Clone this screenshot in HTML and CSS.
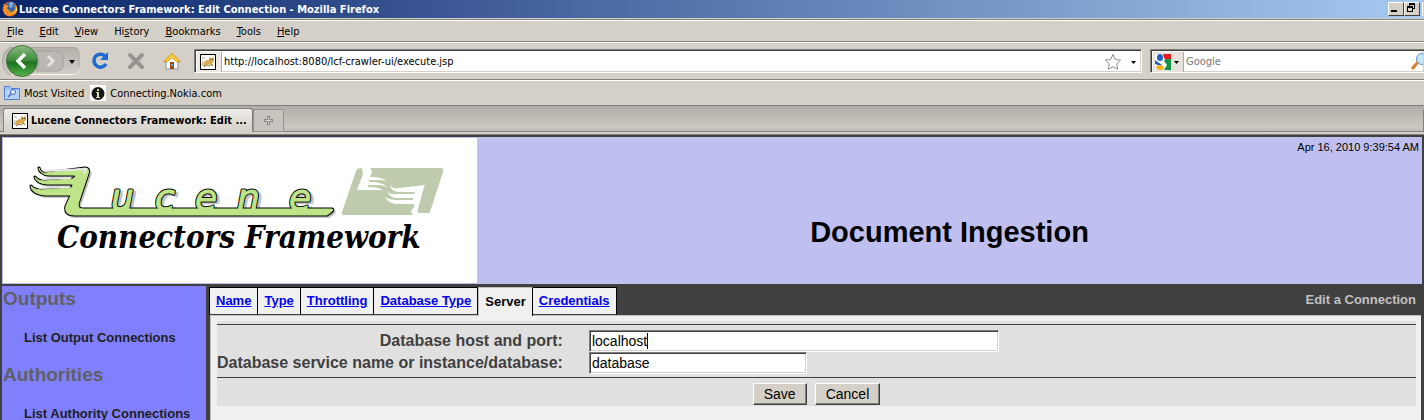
FILE: index.html
```html
<!DOCTYPE html>
<html lang="en">
<head>
<meta charset="utf-8">
<title>Lucene Connectors Framework: Edit Connection</title>
<link rel="stylesheet" href="styles.css">
</head>
<body>
<svg width="0" height="0" class="defs" aria-hidden="true">
  <defs>
    <symbol id="favicon" viewBox="0 0 16 16">
      <rect x=".5" y=".5" width="15" height="15" fill="#fff" stroke="#000"/>
      <path d="M2 3l3 2M3 7l-1 4 3 1" fill="none" stroke="#aaa69b"/>
      <path d="M3 12l1-4 3-2 2 0V3l2 1 3-1v4l-2 2 1 3-3-1-2-1-3 2z" fill="#dba84b"/>
      <path d="M4 13l3-2 3 1M11 10l2 2" fill="none" stroke="#8a7048"/>
      <path d="M10 5h1v1h-1zM12 5h1v1h-1z" fill="#554326"/>
    </symbol>
  </defs>
</svg>

<header class="titlebar">
  <svg class="fox" viewBox="0 0 16 16" aria-hidden="true">
    <circle cx="8" cy="8" r="7.500" fill="#d95a12"/>
    <circle cx="8.500" cy="6" r="5" fill="#2c65b4"/>
    <path d="M7 2l3-1 2 2-2 1 1 2-3 1z" fill="#79b9ed"/>
    <path d="M1 3l1 1 3 0 2 1-2 2 1 2 3 0-2 2 3 0 3-3-1-4 2 3c1 5-3 8-7 8-6-1-7-7-4-12z" fill="#f39024"/>
    <path d="M13 4c2 4 1 7-2 9 4-1 6-5 2-9z" fill="#ffda4b"/>
  </svg>
  <span class="title">Lucene Connectors Framework: Edit Connection - Mozilla Firefox</span>
  <button class="win" aria-label="Minimize"><svg viewBox="0 0 12 10"><path d="M2 7h6v2H2z"/></svg></button>
  <button class="win" aria-label="Restore"><svg viewBox="0 0 12 10"><path d="M4 0h6v6H8V5h1V2H5v1H4zM2 3h6v6H2zM3 5v3h4V5z" fill-rule="evenodd"/></svg></button>
  <span class="win-cut"></span>
</header>

<nav class="menubar">
  <button><u>F</u>ile</button><button><u>E</u>dit</button><button><u>V</u>iew</button><button>Hi<u>s</u>tory</button><button><u>B</u>ookmarks</button><button><u>T</u>ools</button><button><u>H</u>elp</button>
</nav>

<div class="navbar">
  <svg class="nav-icons" viewBox="0 0 192 36" role="img" aria-label="Back, forward, reload, stop, home">
    <defs>
      <linearGradient id="gr" x1="0" y1="0" x2="0" y2="1"><stop offset="0" stop-color="#8bbb83"/><stop offset=".45" stop-color="#438f40"/><stop offset=".55" stop-color="#1f731f"/><stop offset="1" stop-color="#55b34d"/></linearGradient>
      <linearGradient id="gg" x1="0" y1="0" x2="0" y2="1"><stop offset="0" stop-color="#b4b1ab"/><stop offset="1" stop-color="#d0cdc6"/></linearGradient>
    </defs>
    <path d="M10 4.500h63q6 0 6 6v14q0 7-6 7H10C0 26 0 10 10 4.500z" fill="url(#gg)" stroke="#aaa7a0"/>
    <path d="M11 31.500h62q6 0 6-6" fill="none" stroke="#f6f5f2"/>
    <path d="M36 8h20q7 1 7 6v8q0 6-7 6H36q6-10 0-20z" fill="#bbb8b3" stroke="#a5a29c"/>
    <path d="M48 13l5 5-5 5" fill="none" stroke="#e5e3df" stroke-width="3"/>
    <circle cx="22" cy="18" r="15.500" fill="url(#gr)" stroke="#49733f"/>
    <path d="M25 11l-7 7 7 7" fill="none" stroke="#fff" stroke-width="3.500"/>
    <path d="M69 17h6l-3 4z" fill="#000"/>
    <path d="M105 13a6.500 6.500 0 1 0 1 8" fill="none" stroke="#1e6bd2" stroke-width="3.500"/>
    <path d="M108 9v8h-8z" fill="#1e6bd2"/>
    <path d="M130 12l12 12M142 12l-12 12" stroke="#97958f" stroke-width="4" stroke-linecap="round"/>
    <path d="M166 17v9h12v-9l-6-6z" fill="#fafafa" stroke="#8d8d8d"/>
    <path d="M170 19h4v7h-4z" fill="#8e4a18"/><path d="M171 21h2v2h-2z" fill="#62b6e5"/>
    <path d="M163.500 18.500l8.500-8 8.500 8h-4l-4.500-4-4.500 4z" fill="#ffd23d" stroke="#dc9416"/>
  </svg>
  <div class="field url">
    <span class="site"><svg class="i16" aria-hidden="true"><use href="#favicon"/></svg></span>
    <input type="text" aria-label="Location" value="http://localhost:8080/lcf-crawler-ui/execute.jsp">
    <svg class="star" viewBox="0 0 34 18" aria-hidden="true"><path d="M9 1.500l2.400 5 5.100.6-3.800 3.700 1 5.500L9 13.700l-4.700 2.600 1-5.500L1.500 7.100l5.100-.6z" fill="#fff" stroke="#8c8c8c"/><path d="M27 8h5l-2.500 3z"/></svg>
  </div>
  <div class="field search">
    <span class="engine"><svg viewBox="0 0 24 16" aria-hidden="true">
      <path d="M0 0h16v16H0z" fill="#fff"/><path d="M8 0h8v7h-4L9 4z" fill="#e9181c"/><path d="M16 5v11H9l3-5-3-4 2-2z" fill="#149247"/><ellipse cx="5" cy="3.500" rx="3" ry="3.500" fill="#205fc4"/><path d="M0 6l7 5-1 1-6-2z" fill="#205fc4"/><ellipse cx="5" cy="13.500" rx="4" ry="2.500" fill="#f5b51b"/><path d="M19 7h5l-2.500 3z"/></svg></span>
    <input type="text" aria-label="Search" placeholder="Google">
    <svg class="glass" viewBox="0 0 12 18" aria-hidden="true"><path d="M1 16l6-7" stroke="#df812a" stroke-width="3"/><circle cx="11" cy="6" r="5.500" fill="#c4e5fa" stroke="#6c95c1"/></svg>
  </div>
</div>

<div class="bookmarks">
  <button><svg class="i16" viewBox="0 0 16 16" aria-hidden="true"><path d="M.5 1.500h5l2 2h8v11H.5z" fill="#9fc2f8" stroke="#4d82cf"/><path d="M1 5h14v9H1z" fill="#b7d3fd"/><circle cx="9" cy="7" r="2.500" fill="#e4f0ff" stroke="#3e69ba"/><path d="M7 9l-3 3" stroke="#3e69ba" stroke-width="1.500"/></svg>Most Visited</button>
  <button><svg class="i16" viewBox="0 0 16 16" aria-hidden="true"><path d="M0 0h16v16H0z" fill="#fff"/><circle cx="8" cy="8.500" r="6.500" fill="#161714"/><path d="M7 4h2v2H7zM6 7h3v5h1v1H6v-1h1V8H6z" fill="#ddd8b0"/></svg>Connecting.Nokia.com</button>
</div>

<div class="tabstrip">
  <button class="btab"><svg class="i16" aria-hidden="true"><use href="#favicon"/></svg>Lucene Connectors Framework: Edit ...</button>
  <button class="newtab" aria-label="New tab"><svg viewBox="0 0 9 9"><path d="M4.500 0v9M0 4.500h9" stroke="#888" stroke-width="3"/><path d="M4.500 1v7M1 4.500h7" stroke="#d0cdc7"/></svg></button>
  <span class="tab-end"></span>
</div>

<div class="page">
  <div class="banner">
    <div class="logo">
      <svg viewBox="0 0 474 145" role="img" aria-label="Lucene Connectors Framework">
        <defs>
          <path id="wing" d="M36 30Q37 36 43 35L82 30Q87 30 85 36L76 63Q73 71 80 71H329Q332 72 324 77H71Q61 77 63 68L68 57H41Q28 55 28 48Q31 52 38 52L68 50Q72 46 68 46H44Q33 45 32 39Q35 43 41 43L70 41Q75 37 70 37H49Q38 38 36 30Z"/>
          <g id="script" class="script">
            <text x="108 152 192 234 286" y="72">ucene</text>
          </g>
        </defs>
        <g class="shade"><use href="#wing" x="2" y="2"/><use href="#script" x="3" y="2"/></g>
        <g class="edge"><use href="#wing"/><use href="#script"/></g>
        <g class="lime"><use href="#script"/><use href="#wing"/></g>
        <path d="M42 33L83 31L81 36M39 41L68 40M36 50L67 49" fill="none" stroke="#e8e8e8" stroke-width="2"/>
        <path d="M358 30Q354 30 353 33L339 74Q338 77 341 77H424Q426 77 427 74L440 34Q441 30 438 30Z" fill="#bfcbad"/>
        <path d="M358 29Q361 34 359 39L354 52H372Q378 51 381 53Q377 49 365 49V47H376Q381 47 384 49Q380 44 366 44V42H377Q382 42 384 44Q381 39 367 39Q371 33 366 29Z" fill="#fff"/>
        <path d="M422 47L396 50Q390 51 387 47Q388 53 395 54H412L411 56H392Q387 57 384 53Q386 59 393 60H410V62H392Q387 62 382 59Q386 66 394 66H409Q413 66 411 69Q405 75 412 78H427V75H416Q414 74 415 71L421 49Z" fill="#fff"/>
        <text class="framework" x="54" y="110">Connectors Framework</text>
      </svg>
    </div>
    <div class="banner-main">
      <div class="date">Apr 16, 2010 9:39:54 AM</div>
      <h1>Document Ingestion</h1>
    </div>
  </div>
  <div class="columns">
    <aside class="side">
      <h2>Outputs</h2>
      <a href="#">List Output Connections</a>
      <h2>Authorities</h2>
      <a href="#">List Authority Connections</a>
    </aside>
    <main class="main">
      <div class="tabs">
        <a href="#">Name</a><a href="#">Type</a><a href="#">Throttling</a><a href="#">Database Type</a><span class="current">Server</span><a href="#">Credentials</a>
        <span class="action">Edit a Connection</span>
      </div>
      <form class="panel">
        <div class="grid">
          <div class="rule"></div>
          <label for="host">Database host and port:</label>
          <div class="cell"><input id="host" type="text" size="64" class="wide" value="localhost"><i class="caret"></i></div>
          <label for="db">Database service name or instance/database:</label>
          <div class="cell"><input id="db" type="text" size="32" class="short" value="database"></div>
          <div class="rule low"></div>
          <div class="buttons"><button type="button">Save</button><button type="button">Cancel</button></div>
        </div>
      </form>
    </main>
  </div>
</div>
</body>
</html>
```

FILE: styles.css
```css
* { box-sizing: border-box; }
body {
  margin: 0;
  min-height: 100vh;
  display: flex;
  flex-direction: column;
  overflow: hidden;
  background: #d4d0c8;
  color: #000;
  font: 11px "DejaVu Sans Condensed", "DejaVu Sans", sans-serif;
}
button, input { font: inherit; color: inherit; margin: 0; padding: 0; border: 0; background: none; border-radius: 0; outline: 0; }
.defs { position: absolute; }
.i16 { width: 16px; height: 16px; flex: none; }

.titlebar { height: 18px; display: flex; align-items: center; background: linear-gradient(90deg, #0a246a, #a6caf0); color: #fff; font-weight: bold; }
.fox { width: 16px; height: 16px; margin: 0 1px 0 2px; }
.title { flex: 1; white-space: nowrap; }
.win { width: 16px; height: 14px; background: #d4d0c8; border: 1px solid; border-color: #fff #404040 #404040 #fff; color: #000; display: flex; }
.win svg { width: 12px; height: 10px; }
.win-cut { width: 2px; height: 14px; margin-left: 2px; background: #d4d0c8; border-left: 1px solid #fff; }

.menubar { height: 24px; margin-top: 1px; display: flex; align-items: center; gap: 16px; padding-left: 7px; border-top: 1px solid #808080; border-bottom: 1px solid #fff; box-shadow: inset 0 1px #fff, inset 0 -1px #808080; }

.navbar { height: 38px; display: flex; align-items: center; padding-bottom: 1px; border-bottom: 1px solid #fff; box-shadow: inset 0 -1px #808080; }
.nav-icons { width: 192px; height: 36px; flex: none; }
.field { height: 24px; display: flex; align-items: center; background: #fff; border: 1px solid; border-color: #808080 #fff #fff #808080; box-shadow: inset 1px 1px #404040, inset -1px -1px #d4d0c8; padding: 2px 1px 1px 2px; }
.field input { flex: 1; min-width: 0; height: 18px; padding-left: 2px; }
.field ::placeholder { color: #777; opacity: 1; }
.url { flex: 1; margin-left: 2px; margin-right: 8px; }
.site { width: 25px; height: 20px; background: #ece9e4; border-right: 1px solid #aaa; padding: 2px 3px; }
.star { width: 34px; height: 18px; margin-right: 2px; }
.search { width: 274px; border-right: 0; }
.engine { width: 31px; height: 20px; background: #e6e3dd; border-right: 1px solid #aaa; padding: 2px 2px; }
.engine svg { width: 24px; height: 16px; display: block; }
.glass { width: 12px; height: 18px; }

.bookmarks { height: 25px; display: flex; align-items: center; gap: 6px; padding-left: 4px; border-bottom: 1px solid #808080; }
.bookmarks button { display: flex; align-items: center; gap: 4px; }

.tabstrip { height: 28px; display: flex; align-items: flex-end; background: linear-gradient(#b0ada6, #ccc8c1 80%, #bebab3); border-bottom: 2px solid #d4d0c8; box-shadow: inset 0 -1px #808080; padding: 0 0 0 3px; }
.btab { width: 250px; height: 24px; display: flex; align-items: center; gap: 3px; padding-left: 8px; border: 1px solid #808080; border-bottom: 0; border-radius: 3px 3px 0 0; background: linear-gradient(#efede9, #d4d0c8); font-weight: bold; white-space: nowrap; }
.newtab { width: 31px; height: 23px; border: 1px solid #96938e; background: #c8c4bd; display: flex; align-items: center; justify-content: center; }
.newtab svg { width: 9px; height: 9px; }
.tab-end { margin-left: auto; width: 1px; height: 22px; background: #808080; }

.page { flex: 1; display: flex; flex-direction: column; border-top: 1px solid #808080; padding: 2px 2px 0; background: #404040; font-family: "Liberation Sans", Arial, sans-serif; }
.banner { display: flex; background: #c0c0f0; }
.logo { width: 475px; padding: 1px 0 1px 1px; flex: none; }
.logo svg { display: block; width: 474px; height: 145px; background: #fff; }
.shade { fill: #c4c4c4; stroke: #c4c4c4; stroke-width: 2; }
.edge { fill: #000; stroke: #000; stroke-width: 3; stroke-linejoin: round; }
.lime { fill: #bde486; stroke: #bde486; stroke-width: 1; }
.script { font: italic 36px "DejaVu Sans", sans-serif; }
.framework { font: italic bold 31px "DejaVu Serif Condensed", "DejaVu Serif", serif; }
.banner-main { flex: 1; display: flex; flex-direction: column; padding: 4px 3px; }
.date { text-align: right; line-height: 13px; }
h1 { margin: 60px 0 0; font-size: 29px; line-height: 36px; text-align: center; }

.columns { flex: 1; display: flex; gap: 3px; padding-top: 2px; }
.side { width: 204px; background: #8080ff; }
.side h2 { margin: 0; padding: 2px 1px; font-size: 19px; line-height: 22px; color: #606060; }
.side a { display: block; margin: 18px 0 16px 22px; font-size: 13px; font-weight: bold; line-height: 16px; color: #202020; text-decoration: none; }
.main { flex: 1; display: flex; flex-direction: column; padding-top: 1px; }
.tabs { display: flex; font-size: 13px; font-weight: bold; line-height: 26px; height: 28px; }
.tabs a { background: #f0f0f0; border: 1px solid #000; border-left-width: 0; border-bottom-color: #404040; padding: 0 6px; color: #00e; }
.tabs a:first-child { border-left-width: 1px; }
.tabs .current { background: #f0f0f0; border-top: 1px solid #c0c0c0; border-left: 1px solid #c0c0c0; border-right: 1px solid #000; padding: 1px 6px 0; height: 29px; position: relative; }
.action { margin-left: auto; padding-right: 6px; color: #c0c0c0; }
.panel { flex: 1; margin: 0 1px 0 1px; padding: 5px 5px 0 6px; background: #f0f0f0; border-top: 1px solid #c0c0c0; border-left: 1px solid #c0c0c0; }
.grid { display: grid; grid-template-columns: auto 1fr; column-gap: 26px; padding-top: 3px; background: #e0e0e0; }
.rule { grid-column: 1 / -1; height: 1px; margin-bottom: 5px; background: #404040; }
.rule.low { margin: 3px 0 5px; }
.grid label { font-size: 16px; font-weight: bold; line-height: 22px; text-align: right; color: #404040; white-space: nowrap; }
.cell { height: 22px; position: relative; }
.cell input { height: 22px; background: #fff; font-size: 14px; padding: 2px; border: 1px solid; border-color: #808080 #fff #fff #808080; box-shadow: inset 1px 1px #404040, inset -1px -1px #d4d0c8; }
.wide { width: 410px; }
.short { width: 218px; }
.caret { position: absolute; left: 58px; top: 3px; width: 1px; height: 16px; background: #000; }
.buttons { grid-column: 1 / -1; display: flex; justify-content: center; gap: 8px; padding-bottom: 1px; }
.buttons button { height: 22px; padding: 0 10px; font-size: 14px; background: #d4d0c8; border: 1px solid; border-color: #fff #404040 #404040 #fff; box-shadow: inset -1px -1px #808080; }
```
